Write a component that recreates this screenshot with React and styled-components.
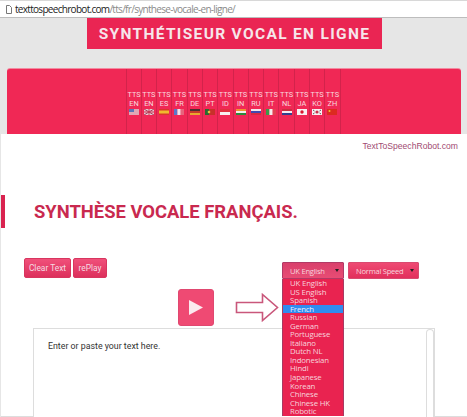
import React from 'react';
import styled, { createGlobalStyle } from 'styled-components';

const Global = createGlobalStyle`
  html, body { margin: 0; padding: 0; background: #e6e6e6; }
  * { box-sizing: border-box; }
`;
const Frame = styled.div`
  width: 467px; height: 417px; overflow: hidden; background: #e6e6e6;
  display: flex; flex-direction: column; font-family: Roboto, sans-serif;
`;
const AddressBar = styled.div`
  height: 18px; flex: none; background: #fff; border-bottom: 1px solid #bdbdbd; border-top: 1px solid #d8d8d8;
  display: flex; align-items: center; gap: 3px; padding-left: 6px;
  font-family: "Open Sans", sans-serif; font-size: 10px; letter-spacing: -0.7px; color: #8a8a8a;
`;
const Domain = styled.span` color: #222; `;
const BannerArea = styled.div`
  height: 51px; flex: none; display: flex; justify-content: center; padding-left: 2px; align-items: flex-start;
`;
const Banner = styled.div`
  width: 295px; height: 31px; background: #ea2553; color: #f6e6ea; display: flex; align-items: center; justify-content: center;
  font-weight: 700; font-size: 15.5px; letter-spacing: 1.32px; white-space: nowrap;
`;
const Panel = styled.div`
  height: 65px; flex: none; margin: 0 6px 0 7px; background: #f02855; border-radius: 3px 3px 0 0;
  display: flex; justify-content: center; box-shadow: 0 -1px 0 #f28aa0, 0 1px 0 #c9264d;
  padding-right: 1px;
`;
const LangCell = styled.div`
  width: 15.3px; border-right: 1px solid #d2234b; padding-top: 22px; display: flex; flex-direction: column; align-items: center;
  font-size: 7.4px; line-height: 8.6px; color: #f8d8df; &:first-child { border-left: 1px solid #d2234b; }
`;
const FlagBox = styled.svg`
  width: 10px; height: 6px; margin-top: 1px; display: block;
`;
const Page = styled.div`
  flex: 1; background: #fff; margin-left: 1px; border-bottom: 1px solid #ddd; position: relative; min-height: 0;
`;
const SiteLink = styled.div`
  font-family: "Liberation Sans", sans-serif; font-size: 8.6px; color: #a14a72; text-align: right; padding: 7px 9px 0 0; line-height: 11px;
`;
const Heading = styled.h1`
  margin: 43px 0 0; height: 33px; border-left: 4px solid #d9234f; padding-left: 29px; display: flex; align-items: center;
  font-size: 18.4px; font-weight: 700; color: #c9294f; white-space: nowrap;
`;
const Controls = styled.div`
  display: grid; grid-template-columns: 1fr auto; padding: 30px 48px 0 23px;
`;
const Buttons = styled.div` display: flex; gap: 2px; align-items: flex-start; `;
const Action = styled.button`
  height: 20px; width: ${p => p.$w}px; padding: 0; border: 1px solid #d8365f; border-radius: 2px;
  background: linear-gradient(#f0507a, #dd305c); color: #f6dbe2;
  font-family: Roboto, sans-serif; font-size: 8.4px;
`;
const Selects = styled.div` display: flex; gap: 4px; padding-top: 4px; `;
const SelectWrap = styled.div` position: relative; z-index: 2; `;
const Select = styled.div`
  height: 17px; width: ${p => p.$w}px; background: linear-gradient(#ee4a73, #e22f5c); border: 1px solid #d94a70; border-radius: 1px;
  display: flex; align-items: center; justify-content: space-between; padding: 0 4px 0 7px;
  font-family: "Open Sans", sans-serif; font-size: 7.6px; letter-spacing: -0.25px; color: #f8d5dd; white-space: nowrap;
  ${p => p.$open && 'background: linear-gradient(#d9406c, #e84c74); border-color: #b23a66;'}
`;
const Caret = styled.span`
  width: 0; height: 0; border-left: 2px solid transparent; border-right: 2px solid transparent; border-top: 3px solid #222;
`;
const Menu = styled.div`
  position: absolute; top: 17px; left: 0; width: 62px; background: #e92350; border: 1px solid #a83a62; border-width: 0 1px;
  display: flex; flex-direction: column;
`;
const MenuItem = styled.div`
  height: 8.55px; line-height: 8.55px; padding-left: 7px; font-family: "Open Sans", sans-serif; font-size: 7.8px; letter-spacing: -0.15px; color: #f7d3dc;
  white-space: nowrap; ${p => p.$on && 'background: #2f8cf0; color: #eef;'}
`;
const PlayRow = styled.div`
  display: flex; align-items: center; padding: 10px 0 0 177px; gap: 21px; height: 47px;
`;
const PlayButton = styled.button`
  width: 36px; height: 37px; padding: 0; border: 1px solid #e04870; border-radius: 3px; background: #ef4a73;
  display: flex; align-items: center; justify-content: center;
`;
const Editor = styled.div`
  margin: 2px 0 0 32px; width: 402px; height: 100px; border: 1px solid #ddd; border-bottom: none; background: #fff; position: relative;
  padding: 11px 14px; font-size: 8.8px; color: #333; line-height: 12px;
`;
const Track = styled.div`
  position: absolute; top: 0; right: 0; bottom: 0; width: 8px; border: 1px solid #ddd; border-radius: 4px 4px 0 0; border-bottom: none; background: #fff;
`;

const flags = {
  us: <><rect width="10" height="6" fill="#e8d8dc"/><path d="M0 1h10M0 3h10M0 5h10" stroke="#d8798c"/><rect width="5" height="3" fill="#5b78b8"/></>,
  uk: <><rect width="10" height="6" fill="#e6c8d0"/><path d="M0 0l10 6M10 0L0 6" stroke="#a4425f"/><path d="M5 0v6M0 3h10" stroke="#c8344f"/></>,
  es: <><rect width="10" height="6" fill="#d8362a"/><rect y="1.5" width="10" height="3" fill="#f0b92e"/></>,
  fr: <><rect width="3.4" height="6" fill="#5b78c8"/><rect x="3.4" width="3.3" height="6" fill="#f2e6ea"/><rect x="6.7" width="3.3" height="6" fill="#e8647c"/></>,
  de: <><rect width="10" height="2" fill="#4a3030"/><rect y="2" width="10" height="2" fill="#c83a2a"/><rect y="4" width="10" height="2" fill="#e8a82e"/></>,
  pt: <><rect width="4" height="6" fill="#2c6a30"/><rect x="4" width="6" height="6" fill="#c8302a"/><circle cx="4" cy="3" r="1.3" fill="#e8c040"/></>,
  id: <><rect width="10" height="3" fill="#e03040"/><rect y="3" width="10" height="3" fill="#f7eef0"/></>,
  in: <><rect width="10" height="2" fill="#f09030"/><rect y="2" width="10" height="2" fill="#f5ecec"/><rect y="4" width="10" height="2" fill="#2c8a3a"/></>,
  ru: <><rect width="10" height="2" fill="#f0e8ee"/><rect y="2" width="10" height="2" fill="#4048b0"/><rect y="4" width="10" height="2" fill="#d82840"/></>,
  it: <><rect width="3.4" height="6" fill="#3a9a48"/><rect x="3.4" width="3.3" height="6" fill="#f5ecec"/><rect x="6.7" width="3.3" height="6" fill="#e04050"/></>,
  nl: <><rect width="10" height="2" fill="#c83040"/><rect y="2" width="10" height="2" fill="#f5ecf0"/><rect y="4" width="10" height="2" fill="#34408c"/></>,
  ja: <><rect width="10" height="6" fill="#f8f0f2"/><circle cx="5" cy="3" r="1.7" fill="#d81830"/></>,
  ko: <><rect width="10" height="6" fill="#f8f0f2"/><circle cx="5" cy="3" r="1.6" fill="#c8304a"/><path d="M1 1l1.5 1M9 1L7.5 2M1 5l1.5-1M9 5L7.5 4" stroke="#333" strokeWidth=".8"/></>,
  zh: <><rect width="10" height="6" fill="#dc2a20"/><circle cx="2.5" cy="2" r="1" fill="#f0c030"/></>,
};
const langs = [['EN','us'],['EN','uk'],['ES','es'],['FR','fr'],['DE','de'],['PT','pt'],['ID','id'],['IN','in'],['RU','ru'],['IT','it'],['NL','nl'],['JA','ja'],['KO','ko'],['ZH','zh']];
const voices = ['UK English','US English','Spanish','French','Russian','German','Portuguese','Italiano','Dutch NL','Indonesian','Hindi','Japanese','Korean','Chinese','Chinese HK','Robotic'];

export default function App() {
  return (
    <Frame>
      <Global />
      <AddressBar>
        <svg width="6" height="9" viewBox="0 0 6 9"><path d="M.5.5h3l2 2v6h-5z" fill="#fff" stroke="#777"/></svg>
        <span><Domain>texttospeechrobot.com</Domain>/tts/fr/synthese-vocale-en-ligne/</span>
      </AddressBar>
      <BannerArea><Banner>SYNTHÉTISEUR VOCAL EN LIGNE</Banner></BannerArea>
      <Panel>
        {langs.map(([code, f], i) => (
          <LangCell key={i}>
            <span>TTS</span><span>{code}</span>
            <FlagBox viewBox="0 0 10 6">{flags[f]}</FlagBox>
          </LangCell>
        ))}
      </Panel>
      <Page>
        <SiteLink>TextToSpeechRobot.com</SiteLink>
        <Heading>SYNTHÈSE VOCALE FRANÇAIS.</Heading>
        <Controls>
          <Buttons>
            <Action $w={47}>Clear Text</Action>
            <Action $w={34}>rePlay</Action>
          </Buttons>
          <Selects>
            <SelectWrap>
              <Select $w={62} $open>UK English<Caret /></Select>
              <Menu>
                {voices.map(v => <MenuItem key={v} $on={v === 'French'}>{v}</MenuItem>)}
              </Menu>
            </SelectWrap>
            <Select $w={71}>Normal Speed<Caret /></Select>
          </Selects>
        </Controls>
        <PlayRow>
          <PlayButton aria-label="Play">
            <svg width="16" height="17" viewBox="0 0 16 17"><path d="M1 1l14 7.5L1 16z" fill="#fbe9ee"/></svg>
          </PlayButton>
          <svg width="44" height="29" viewBox="0 0 44 29"><path d="M1.5 9.5h26V1.5l15 13-15 13v-8h-26z" fill="#fff" stroke="#c9577b" strokeWidth="1.6"/></svg>
        </PlayRow>
        <Editor>
          Enter or paste your text here.
          <Track />
        </Editor>
      </Page>
    </Frame>
  );
}
